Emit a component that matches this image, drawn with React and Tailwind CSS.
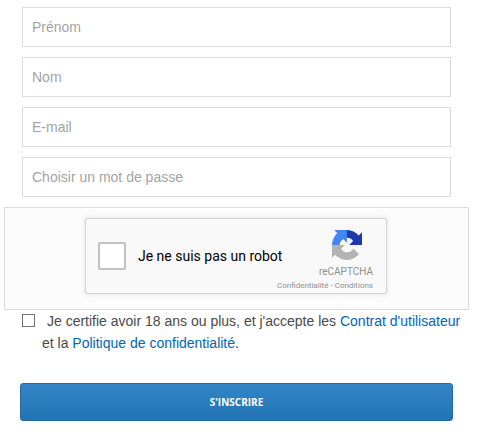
import React, { useState } from "react";

const fields = [
  { name: "firstName", type: "text", label: "Prénom" },
  { name: "lastName", type: "text", label: "Nom" },
  { name: "email", type: "email", label: "E-mail" },
  { name: "password", type: "password", label: "Choisir un mot de passe" },
];

function RecaptchaLogo() {
  return (
    <svg viewBox="0 0 64 64" className="size-[30px]" aria-hidden="true">
      <path
        fill="#1c3aa9"
        d="M64 31.955l-.033-1.37V4.687l-7.16 7.16C50.948 4.674 42.033.093 32.05.093c-10.389 0-19.622 4.96-25.461 12.64l11.736 11.86a15.55 15.55 0 0 1 4.754-5.334c2.05-1.6 4.952-2.906 8.968-2.906.485 0 .86.057 1.135.163 4.976.393 9.288 3.14 11.828 7.124l-8.307 8.307L64 31.953"
      />
      <path
        fill="#4285f4"
        d="M31.862.094l-1.37.033H4.594l7.16 7.16C4.58 13.147 0 22.06 0 32.046c0 10.388 4.96 19.622 12.64 25.46L24.5 45.77a15.55 15.55 0 0 1-5.334-4.754c-1.6-2.05-2.906-4.952-2.906-8.968 0-.485.057-.86.163-1.135.393-4.976 3.14-9.288 7.124-11.828l8.307 8.307L31.86.095"
      />
      <path
        fill="#b3b3b3"
        d="M.001 32.045l.033 1.37v25.898l7.16-7.16c5.86 7.173 14.774 11.754 24.76 11.754 10.388 0 19.622-4.96 25.46-12.64l-11.736-11.86a15.55 15.55 0 0 1-4.754 5.334c-2.05 1.6-4.952 2.906-8.968 2.906-.485 0-.86-.057-1.135-.163-4.976-.393-9.288-3.14-11.828-7.124l8.307-8.307c-10.522.04-22.4.066-27.295-.005"
      />
    </svg>
  );
}

function Recaptcha() {
  return (
    <div className="flex justify-center border border-[#dcdcdc] bg-[#fcfcfc] pt-2.5 pr-px pb-[15px]">
      <div className="flex h-[76px] w-[302px] justify-between rounded-[3px] border border-[#d3d3d3] bg-[#f9f9f9] pl-3 pr-[13px] font-[Roboto,sans-serif] whitespace-nowrap shadow-[0_0_4px_1px_rgba(0,0,0,0.08)]">
        <label className="flex items-center gap-3 text-sm text-black">
          <input
            type="checkbox"
            name="robot"
            className="size-7 shrink-0 appearance-none rounded-[2px] border-2 border-[#c1c1c1] bg-white checked:bg-[#4285f4]"
          />
          Je ne suis pas un robot
        </label>

        {/* the links are wider than this column and run out to the left */}
        <div className="flex w-14 flex-col items-end pt-[11px] text-[#909090]">
          <div className="mr-[11px]">
            <RecaptchaLogo />
          </div>
          <div className="mt-1 text-[10px] leading-4">reCAPTCHA</div>
          <div className="text-[8px] leading-3">
            <a href="#privacy">Confidentialité</a> - <a href="#conditions">Conditions</a>
          </div>
        </div>
      </div>
    </div>
  );
}

function App() {
  const [values, setValues] = useState({});

  const handleChange = (e) => {
    setValues({ ...values, [e.target.name]: e.target.value });
  };

  return (
    <form
      className="bg-white pt-[7px] pr-[25px] pl-1 font-['Liberation_Sans',Arial,sans-serif] text-sm text-[#4a4a4a]"
      onSubmit={(e) => e.preventDefault()}
    >
      {/* FIELDS */}
      <div className="mb-2.5 flex flex-col gap-2.5 px-[18px]">
        {fields.map((field) => (
          <input
            key={field.name}
            type={field.type}
            name={field.name}
            aria-label={field.label}
            placeholder={field.label}
            value={values[field.name] || ""}
            onChange={handleChange}
            className="h-10 w-full border border-[#dcdcdc] bg-white px-[9px] text-sm placeholder:text-[#a3a3a3]"
          />
        ))}
      </div>

      <Recaptcha />

      {/* TERMS */}
      <div className="flex items-start pl-[18px] leading-[22px]">
        <input
          id="terms"
          type="checkbox"
          name="terms"
          className="mt-1 size-[13px] shrink-0 appearance-none border border-[#707070] bg-white checked:bg-[#0066b8]"
        />
        <label htmlFor="terms" className="ml-[7px] indent-[5px]">
          Je certifie avoir 18 ans ou plus, et j'accepte les{" "}
          <a href="#contract" className="text-[#0066b8]">Contrat d'utilisateur</a>{" "}
          et la{" "}
          <a href="#policy" className="text-[#0066b8]">Politique de confidentialité</a>.
        </label>
      </div>

      {/* SUBMIT */}
      <div className="mt-[29px] px-4">
        <button
          type="submit"
          className="h-[38px] w-full rounded-[3px] border border-[#2468a5] bg-linear-to-b from-[#3385c5] to-[#2374b5] font-['Open_Sans',sans-serif] text-[10px] font-bold text-white"
        >
          S'INSCRIRE
        </button>
      </div>
    </form>
  );
}

export default App;
